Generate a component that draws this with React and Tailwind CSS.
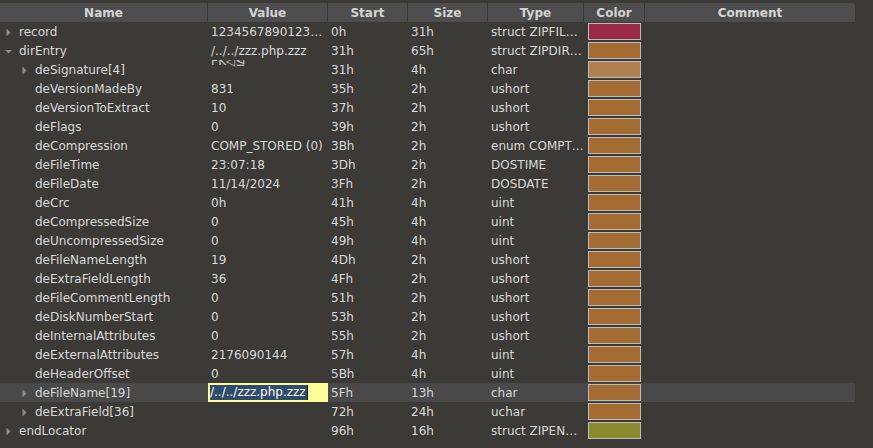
import React from "react";

const rows = [
  { name: "record", level: 0, arrow: "closed", value: "1234567890123…", start: "0h", size: "31h", type: "struct ZIPFIL…", color: "bg-[#9b2b47]" },
  { name: "dirEntry", level: 0, arrow: "open", value: "/../../zzz.php.zzz", start: "31h", size: "65h", type: "struct ZIPDIR…", color: "bg-[#a46c32]" },
  { name: "deSignature[4]", level: 1, arrow: "closed", value: "sig", start: "31h", size: "4h", type: "char", color: "bg-[#b08050]" },
  { name: "deVersionMadeBy", level: 1, value: "831", start: "35h", size: "2h", type: "ushort", color: "bg-[#a46c32]" },
  { name: "deVersionToExtract", level: 1, value: "10", start: "37h", size: "2h", type: "ushort", color: "bg-[#a46c32]" },
  { name: "deFlags", level: 1, value: "0", start: "39h", size: "2h", type: "ushort", color: "bg-[#a46c32]" },
  { name: "deCompression", level: 1, value: "COMP_STORED (0)", start: "3Bh", size: "2h", type: "enum COMPT…", color: "bg-[#a46c32]" },
  { name: "deFileTime", level: 1, value: "23:07:18", start: "3Dh", size: "2h", type: "DOSTIME", color: "bg-[#a46c32]" },
  { name: "deFileDate", level: 1, value: "11/14/2024", start: "3Fh", size: "2h", type: "DOSDATE", color: "bg-[#a46c32]" },
  { name: "deCrc", level: 1, value: "0h", start: "41h", size: "4h", type: "uint", color: "bg-[#a46c32]" },
  { name: "deCompressedSize", level: 1, value: "0", start: "45h", size: "4h", type: "uint", color: "bg-[#a46c32]" },
  { name: "deUncompressedSize", level: 1, value: "0", start: "49h", size: "4h", type: "uint", color: "bg-[#a46c32]" },
  { name: "deFileNameLength", level: 1, value: "19", start: "4Dh", size: "2h", type: "ushort", color: "bg-[#a46c32]" },
  { name: "deExtraFieldLength", level: 1, value: "36", start: "4Fh", size: "2h", type: "ushort", color: "bg-[#a46c32]" },
  { name: "deFileCommentLength", level: 1, value: "0", start: "51h", size: "2h", type: "ushort", color: "bg-[#a46c32]" },
  { name: "deDiskNumberStart", level: 1, value: "0", start: "53h", size: "2h", type: "ushort", color: "bg-[#a46c32]" },
  { name: "deInternalAttributes", level: 1, value: "0", start: "55h", size: "2h", type: "ushort", color: "bg-[#a46c32]" },
  { name: "deExternalAttributes", level: 1, value: "2176090144", start: "57h", size: "4h", type: "uint", color: "bg-[#a46c32]" },
  { name: "deHeaderOffset", level: 1, value: "0", start: "5Bh", size: "4h", type: "uint", color: "bg-[#a46c32]" },
  { name: "deFileName[19]", level: 1, arrow: "closed", value: "edit", start: "5Fh", size: "13h", type: "char", color: "bg-[#a46c32]", selected: true },
  { name: "deExtraField[36]", level: 1, arrow: "closed", value: "", start: "72h", size: "24h", type: "uchar", color: "bg-[#a46c32]" },
  { name: "endLocator", level: 0, arrow: "closed", value: "", start: "96h", size: "16h", type: "struct ZIPEN…", color: "bg-[#8a8a2f]" },
];

function Arrow({ kind }) {
  if (kind === "open")
    return (
      <svg width="9" height="9" viewBox="0 0 9 9" className="shrink-0">
        <path d="M1 3 L8 3 L4.5 6.5 Z" fill="#8c8c8c" />
      </svg>
    );
  if (kind === "closed")
    return (
      <svg width="9" height="9" viewBox="0 0 9 9" className="shrink-0">
        <path d="M2.5 0.5 L6.5 4.5 L2.5 8.5 Z" fill="#8c8c8c" />
      </svg>
    );
  return <span className="w-[9px] shrink-0" />;
}

function Header() {
  const cols = [
    ["Name", "w-[208px]"],
    ["Value", "w-[120px]"],
    ["Start", "w-[80px]"],
    ["Size", "w-[80px]"],
    ["Type", "w-[96px]"],
    ["Color", "w-[61px]"],
    ["Comment", "flex-1"],
  ];
  return (
    <div className="flex h-[19px] w-[855px] bg-[#4e4e4e] rounded-tr-[4px] text-[12px] font-bold text-[#d4d4d4]">
      {cols.map(([label, w], i) => (
        <div
          key={label}
          className={`${w} text-center pt-[1px] leading-[18px] ${i < cols.length - 1 ? "border-r border-[#3b3b3b]" : ""}`}
        >
          {label}
        </div>
      ))}
    </div>
  );
}

function Row({ r }) {
  return (
    <div className={`flex h-[19px] w-[855px] text-[12px] leading-[19px] text-[#dadada] ${r.selected ? "bg-[#494949]" : ""}`}>
      <div className={`w-[208px] flex items-center pt-[1px] ${r.level === 0 ? "pl-[4px]" : "pl-[20px]"}`}>
        <Arrow kind={r.arrow} />
        <span className="pl-[6px] whitespace-nowrap">{r.name}</span>
      </div>
      <div className="w-[120px] h-full relative overflow-hidden whitespace-nowrap">
        {r.value === "sig" ? (
          <span className="absolute left-[3px] top-[-8px] text-[#d0d0d0]">PK◁⊴</span>
        ) : r.value === "edit" ? (
          <div className="h-full w-[121px] bg-[#ffff99] flex items-center pl-[2px]">
            <span className="bg-[#2f4b6b] text-white leading-[15px] pr-[1px]">/../../zzz.php.zzz</span>
            <span className="w-[1px] h-[15px] bg-[#1a1a1a]" />
          </div>
        ) : (
          <span className="block pl-[3px] pt-[1px] leading-[18px]">{r.value}</span>
        )}
      </div>
      <div className="w-[80px] pl-[3px] pt-[1px] leading-[18px] whitespace-nowrap">{r.start}</div>
      <div className="w-[80px] pl-[3px] pt-[1px] leading-[18px] whitespace-nowrap">{r.size}</div>
      <div className="w-[96px] pl-[3px] pt-[1px] leading-[18px] whitespace-nowrap overflow-hidden">{r.type}</div>
      <div className="w-[61px] h-full flex items-center pl-[4px]">
        <div className={`w-[53px] h-[17px] border border-[#bdbdbd] ${r.color}`} />
      </div>
      <div className="flex-1" />
    </div>
  );
}

export default function App() {
  return (
    <div
      className="w-[873px] h-[448px] bg-[#3b3a36] pt-[3px] overflow-hidden"
      style={{ fontFamily: '"DejaVu Sans", sans-serif' }}
    >
      <Header />
      {rows.map((r) => (
        <Row key={r.name} r={r} />
      ))}
    </div>
  );
}
